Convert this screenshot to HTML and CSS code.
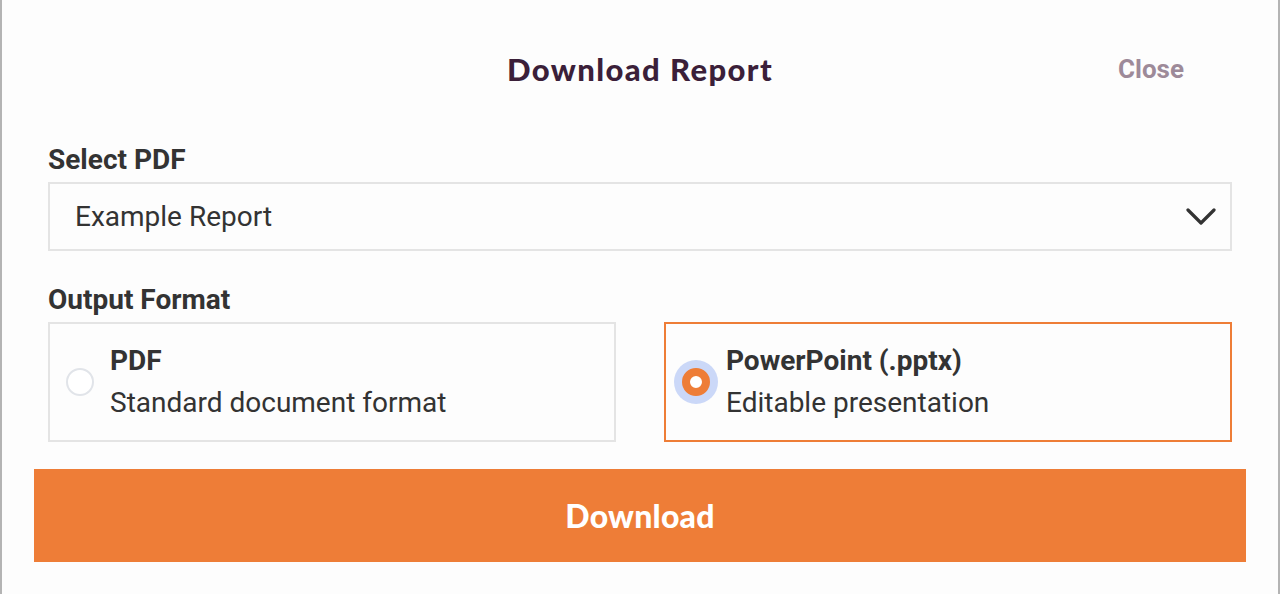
FILE: index.html
```html
<!DOCTYPE html>
<html lang="en">
<head>
<meta charset="utf-8">
<title>Download Report</title>
<link rel="stylesheet" href="styles.css">
</head>
<body>
<div class="backdrop">
  <div class="modal">
    <header class="modal-header">
      <h1 class="modal-title">Download Report</h1>
      <div class="close-wrap">
        <button class="close-btn" type="button">Close</button>
      </div>
    </header>
    <form class="modal-body">
      <label class="field-label">Select PDF</label>
      <div class="select">
        <span class="select-value">Example Report</span>
        <svg class="chevron" width="30" height="18" viewBox="0 0 30 18" aria-hidden="true">
          <path d="M2 2 L15 15 L28 2" fill="none" stroke="#333" stroke-width="3.2" stroke-linecap="round" stroke-linejoin="round"/>
        </svg>
      </div>
      <label class="field-label label-format">Output Format</label>
      <div class="options">
        <div class="option">
          <span class="radio"></span>
          <div class="option-text">
            <div class="option-title">PDF</div>
            <div class="option-desc">Standard document format</div>
          </div>
        </div>
        <div class="option option-selected">
          <span class="radio radio-checked"></span>
          <div class="option-text">
            <div class="option-title">PowerPoint (.pptx)</div>
            <div class="option-desc">Editable presentation</div>
          </div>
        </div>
      </div>
    </form>
    <button class="download-btn" type="button">Download</button>
  </div>
</div>
</body>
</html>
```

FILE: styles.css
```css
html, body {
  margin: 0;
  padding: 0;
  height: 100%;
}
body {
  background: #b4b4b4;
  font-family: Roboto, "Liberation Sans", sans-serif;
  color: #333333;
}
.backdrop {
  height: 100%;
  padding: 0 2px;
  box-sizing: border-box;
}
.modal {
  background: #fdfdfd;
  height: 100%;
  padding: 0 32px;
  box-sizing: border-box;
  display: flex;
  flex-direction: column;
}
.modal-header {
  position: relative;
  height: 138px;
  flex: none;
  display: flex;
  align-items: center;
  justify-content: center;
}
.modal-title {
  margin: 0;
  font-family: Lato, "Open Sans", sans-serif;
  font-weight: 900;
  font-size: 31px;
  color: #3b1f39;
  letter-spacing: 1.4px;
}
.close-wrap {
  position: absolute;
  top: 0;
  bottom: 0;
  right: 62px;
  display: flex;
  align-items: center;
}
.close-btn {
  background: none;
  border: none;
  padding: 0;
  font-family: Roboto, sans-serif;
  font-weight: 700;
  font-size: 26px;
  color: #9d8a99;
  cursor: pointer;
}
.modal-body {
  margin-top: 6px;
  padding: 0 14px;
  display: flex;
  flex-direction: column;
}
.field-label {
  font-weight: 700;
  font-size: 28px;
  line-height: 32px;
  color: #333;
  margin-bottom: 6px;
}
.label-format {
  margin-top: 33px;
}
.select {
  height: 69px;
  border: 2px solid #e4e4e4;
  box-sizing: border-box;
  display: flex;
  align-items: center;
  justify-content: space-between;
  padding: 0 14px 0 25px;
}
.select-value {
  font-size: 28px;
  color: #333;
}
.chevron {
  display: block;
}
.options {
  display: grid;
  grid-template-columns: 1fr 1fr;
  gap: 48px;
}
.option {
  height: 120px;
  border: 2px solid #e4e4e4;
  box-sizing: border-box;
  display: flex;
  align-items: center;
  padding-left: 16px;
  gap: 16px;
}
.option-selected {
  border-color: #ee7d37;
}
.radio {
  width: 28px;
  height: 28px;
  border-radius: 50%;
  border: 2px solid #e1e4e9;
  box-sizing: border-box;
  flex: none;
  background: #fff;
}
.radio-checked {
  border: 8.5px solid #ee7d37;
  background: #fff;
  box-shadow: 0 0 0 8px #cbd8f8;
}
.option-text {
  display: flex;
  flex-direction: column;
  gap: 10px;
}
.option-title {
  font-weight: 700;
  font-size: 28px;
  line-height: 32px;
}
.option-desc {
  font-size: 28px;
  line-height: 32px;
}
.download-btn {
  margin-top: 27px;
  height: 93px;
  width: 100%;
  flex: none;
  background: #ee7d37;
  border: none;
  color: #ffffff;
  font-family: Lato, "Open Sans", sans-serif;
  font-weight: 900;
  font-size: 32px;
  letter-spacing: 0.2px;
  cursor: pointer;
}
```
